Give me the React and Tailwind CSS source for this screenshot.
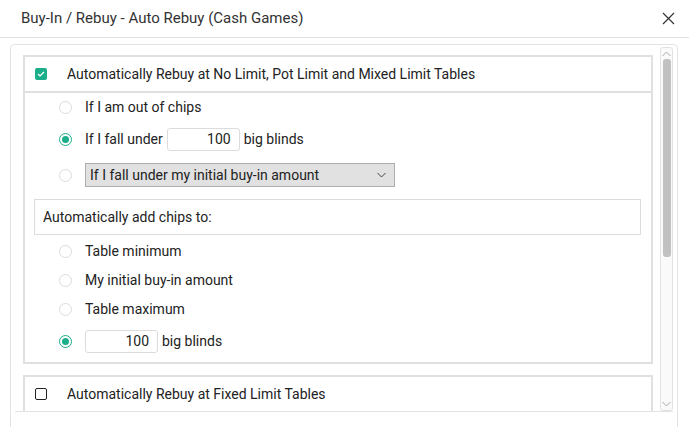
import React from "react";

const font = { fontFamily: "Roboto, 'Liberation Sans', sans-serif" };

function Radio({ checked }) {
  return (
    <span
      className={
        "flex h-[13px] w-[13px] shrink-0 items-center justify-center rounded-full border bg-white " +
        (checked ? "border-[#1aae8a]" : "border-[#dcdcdc]")
      }
    >
      {checked && <span className="h-[7px] w-[7px] rounded-full bg-[#1aae8a]" />}
    </span>
  );
}

function Check({ checked }) {
  if (checked) {
    return (
      <span className="flex h-[12px] w-[12px] shrink-0 items-center justify-center rounded-[2px] bg-[#1aae8a]">
        <svg width="8" height="6" viewBox="0 0 8 6">
          <path d="M1 3 L3 5 L7 1" fill="none" stroke="white" strokeWidth="1.2" />
        </svg>
      </span>
    );
  }
  return <span className="h-[12px] w-[12px] shrink-0 rounded-[2px] border border-[#222] bg-white" />;
}

function Row({ h, checked, children }) {
  return (
    <div className={"flex items-center " + h}>
      <div className="flex w-[60px] justify-end pr-[13px]">
        <Radio checked={checked} />
      </div>
      {children}
    </div>
  );
}

function NumBox({ w }) {
  return (
    <div className={"flex h-[23px] items-center justify-end rounded-[3px] border border-[#dcdcdc] bg-white pr-[8px] " + w}>
      100
    </div>
  );
}

export default function App() {
  return (
    <div className="h-[427px] w-[689px] overflow-hidden bg-white text-[14px] text-[#222]" style={font}>
      {/* title bar */}
      <div className="flex h-[38px] items-center justify-between border-b border-[#e2e2e2] pl-[21px] pr-[14px]">
        <span className="text-[15px] text-[#333]">Buy-In / Rebuy - Auto Rebuy (Cash Games)</span>
        <svg width="13" height="13" viewBox="0 0 13 13">
          <path d="M1 1 L12 12 M12 1 L1 12" stroke="#333" strokeWidth="1.2" />
        </svg>
      </div>

      <div className="ml-[10px] mt-[6px] h-[400px] w-[668px] rounded-[4px] border border-[#e3e3e3] pl-[4px] pt-[1px]">
        <div className="flex h-[366px] w-[658px] border-b border-[#e3e3e3]">
          {/* scroll content */}
          <div className="flex-1 overflow-hidden pl-[8px] pr-[7px] pt-[9px]">
            <div className="border-2 border-[#e0e0e0]">
              <div className="flex h-[36px] items-center border-b-2 border-[#e0e0e0] pl-[10px]">
                <Check checked />
                <span className="ml-[20px]">Automatically Rebuy at No Limit, Pot Limit and Mixed Limit Tables</span>
              </div>
              <Row h="h-[28px]">If I am out of chips</Row>
              <Row h="h-[36px]" checked>
                <span>If I fall under</span>
                <div className="ml-[4px]"><NumBox w="w-[73px]" /></div>
                <span className="ml-[4px]">big blinds</span>
              </Row>
              <Row h="h-[36px]">
                <div className="flex h-[24px] w-[310px] items-center justify-between border border-[#adadad] bg-[#e1e1e1] pl-[4px] pr-[8px]">
                  <span>If I fall under my initial buy-in amount</span>
                  <svg width="9" height="6" viewBox="0 0 9 6">
                    <path d="M0.5 1 L4.5 5 L8.5 1" fill="none" stroke="#444" strokeWidth="1" />
                  </svg>
                </div>
              </Row>
              <div className="ml-[9px] mr-[10px] mt-[6px] flex h-[36px] items-center border border-[#dcdcdc] pl-[8px]">
                Automatically add chips to:
              </div>
              <div className="mt-[2px]">
                <Row h="h-[29px]">Table minimum</Row>
                <Row h="h-[29px]">My initial buy-in amount</Row>
                <Row h="h-[29px]">Table maximum</Row>
                <Row h="h-[34px]" checked>
                  <NumBox w="w-[73px]" />
                  <span className="ml-[4px]">big blinds</span>
                </Row>
              </div>
              <div className="h-[4px]" />
            </div>

            <div className="mt-[11px] border-2 border-[#e0e0e0]">
              <div className="flex h-[36px] items-center border-b-2 border-[#e0e0e0] pl-[10px]">
                <Check />
                <span className="ml-[20px]">Automatically Rebuy at Fixed Limit Tables</span>
              </div>
              <div className="h-[40px]" />
            </div>
          </div>

          {/* scrollbar */}
          <div className="mt-[1px] flex h-[364px] w-[13px] flex-col items-center rounded-[3px] border border-[#e2e2e2] bg-[#fafafa]">
            <svg width="9" height="6" viewBox="0 0 9 6" className="mt-[3px]">
              <path d="M0.5 5 L4.5 1 L8.5 5" fill="none" stroke="#aaa" strokeWidth="1" />
            </svg>
            <div className="mt-[2px] h-[198px] w-[8px] rounded-[3px] bg-[#c1c1c1]" />
            <div className="flex-1" />
            <svg width="9" height="6" viewBox="0 0 9 6" className="mb-[3px]">
              <path d="M0.5 1 L4.5 5 L8.5 1" fill="none" stroke="#aaa" strokeWidth="1" />
            </svg>
          </div>
        </div>
      </div>
    </div>
  );
}
